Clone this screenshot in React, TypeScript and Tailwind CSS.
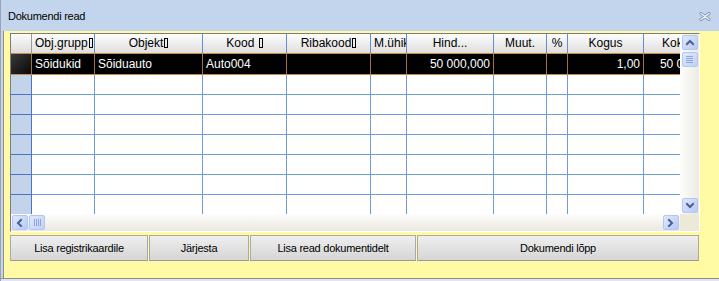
import React from "react";

type Col = {
  w: string;
  head: string;
  box?: boolean;
  value?: string;
  right?: boolean;
  headCls?: string;
};

const cols: Col[] = [
  { w: "w-[63px]", head: "Obj.grupp", box: true, value: "Sõidukid" },
  { w: "w-[108px]", head: "Objekt", box: true, value: "Sõiduauto" },
  { w: "w-[84px]", head: "Kood ", box: true, value: "Auto004" },
  { w: "w-[84px]", head: "Ribakood", box: true },
  { w: "w-[36px]", head: "M.ühik" },
  { w: "w-[87px]", head: "Hind...", value: "50 000,000", right: true },
  { w: "w-[53px]", head: "Muut." },
  { w: "w-[21px]", head: "%" },
  { w: "w-[76px]", head: "Kogus", value: "1,00", right: true },
  { w: "w-[80px]", head: "Kokku", value: "50 000,000", right: true, headCls: "text-left pl-[18px]" },
];

const buttons = [
  { w: "w-[138px]", label: "Lisa registrikaardile" },
  { w: "w-[100px]", label: "Järjesta" },
  { w: "w-[166px]", label: "Lisa read dokumentidelt" },
  { w: "w-[282px]", label: "Dokumendi lõpp" },
];

// missing-glyph box the grid draws after some header names
function Box() {
  return <span className="inline-block w-[4px] h-[10px] border border-black align-[-1px] ml-[1px]" />;
}

function Chevron({ dir }: { dir: "up" | "down" | "left" | "right" }) {
  const d = {
    up: "M2 6 L5 3 L8 6",
    down: "M2 3 L5 6 L8 3",
    left: "M6 2 L3 5 L6 8",
    right: "M3 2 L6 5 L3 8",
  }[dir];
  return (
    <svg width="10" height="9" viewBox="0 0 10 9">
      <path d={d} fill="none" stroke="#4d6185" strokeWidth="2" strokeLinecap="square" />
    </svg>
  );
}

function ScrollBtn({ dir }: { dir: "up" | "down" | "left" | "right" }) {
  return (
    <div className="w-[16px] h-[15px] rounded-[2px] border border-[#b3c6f0] bg-gradient-to-br from-[#dfe8fd] to-[#b6c9f7] flex items-center justify-center shrink-0">
      <Chevron dir={dir} />
    </div>
  );
}

function Thumb({ vertical }: { vertical?: boolean }) {
  return (
    <div className="w-[16px] h-[15px] rounded-[2px] border border-[#b3c6f0] bg-gradient-to-br from-[#dfe8fd] to-[#c0d1f8] flex items-center justify-center shrink-0">
      <div className={vertical ? "flex flex-col gap-[1px]" : "flex gap-[1px]"}>
        {[0, 1, 2, 3].map((i) => (
          <div key={i} className={vertical ? "w-[7px] h-[1px] bg-[#8ea6dc]" : "w-[1px] h-[7px] bg-[#8ea6dc]"} />
        ))}
      </div>
    </div>
  );
}

export default function App() {
  return (
    <div className="w-[719px] h-[281px] flex flex-col overflow-hidden bg-[#c3d5ec] border-l border-[#9aa3b0] font-['Liberation_Sans',Arial,sans-serif] text-black">
      <div className="h-[31px] shrink-0 flex items-center justify-between pl-[7px] pr-[8px]">
        <span className="text-[11px] tracking-[-0.25px] pt-[1px]">Dokumendi read</span>
        <svg width="12" height="9" viewBox="0 0 12 9" className="mt-[1px]">
          <path d="M2 1.5 L10 7.5 M10 1.5 L2 7.5" stroke="#8795aa" strokeWidth="3" strokeLinecap="round" />
          <path d="M2 1.5 L10 7.5 M10 1.5 L2 7.5" stroke="#f4f7fb" strokeWidth="1.2" strokeLinecap="round" />
        </svg>
      </div>

      <div className="h-[247px] shrink-0 ml-[2px] bg-[#fffaa3] border-l border-[#8e8e8e] pl-[6px] pt-[2px] flex flex-col">
        <div className="w-[690px] h-[199px] border-t border-l border-[#7c7c7c] border-r border-b border-r-white border-b-white flex flex-col">
          <div className="h-[180px] flex">
            <div className="w-[669px] overflow-hidden bg-white text-[12px] leading-none">
              {/* header */}
              <div className="flex h-[19px]">
                <div className="w-[21px] shrink-0 border-r border-[#9c9c9c] bg-gradient-to-b from-[#fbfbfb] to-[#dcdcdc]" />
                {cols.map((c) => (
                  <div
                    key={c.head}
                    className={`${c.w} shrink-0 border-r border-[#5d91d4] bg-gradient-to-b from-[#fdfdfd] to-[#dedede] whitespace-nowrap overflow-hidden pt-[3px] ${c.headCls ?? "text-center px-[3px]"}`}
                  >
                    {c.head}
                    {c.box && <Box />}
                  </div>
                ))}
              </div>
              {/* selected row */}
              <div className="flex h-[22px] border-y border-[#c98a45] bg-black text-white">
                <div className="w-[21px] shrink-0 border-r border-[#a5743d] bg-gradient-to-br from-[#3a3a3a] to-[#0a0a0a]" />
                {cols.map((c) => (
                  <div
                    key={c.head}
                    className={`${c.w} shrink-0 border-r border-[#a5743d] whitespace-nowrap overflow-hidden px-[3px] pt-[4px] ${c.right ? "text-right" : "text-left"}`}
                  >
                    {c.value}
                  </div>
                ))}
              </div>
              {/* empty rows */}
              {[0, 1, 2, 3, 4, 5, 6].map((r) => (
                <div key={r} className="flex h-[20px]">
                  <div className="w-[21px] shrink-0 border-r border-b border-[#4677c0] bg-[#c3d3ea]" />
                  {cols.map((c) => (
                    <div key={c.head} className={`${c.w} shrink-0 border-r border-b border-[#6d9cda]`} />
                  ))}
                </div>
              ))}
            </div>
            <div className="flex-1 flex flex-col items-center justify-between py-[1px] bg-gradient-to-r from-[#fdfdfb] to-[#ecebe3]">
              <div className="flex flex-col gap-[2px]">
                <ScrollBtn dir="up" />
                <Thumb vertical />
              </div>
              <ScrollBtn dir="down" />
            </div>
          </div>
          <div className="flex-1 flex">
            <div className="w-[669px] flex items-center justify-between pl-[1px] pr-[1px] bg-gradient-to-b from-[#fdfdfb] to-[#ebe8df]">
              <div className="flex gap-[1px]">
                <ScrollBtn dir="left" />
                <Thumb />
              </div>
              <ScrollBtn dir="right" />
            </div>
            <div className="flex-1 bg-[#ece9d8]" />
          </div>
        </div>

        <div className="mt-[3px] flex gap-[1px] h-[26px]">
          {buttons.map((b) => (
            <div
              key={b.label}
              className={`${b.w} shrink-0 border border-[#a9a9a9] border-b-[#9a9a9a] bg-gradient-to-b from-[#efefef] to-[#d5d5d5] flex items-center justify-center text-[11px] tracking-[-0.25px]`}
            >
              {b.label}
            </div>
          ))}
        </div>
      </div>

      <div className="flex-1 border-t border-[#8e8e8e] bg-[#dfe6ef]" />
    </div>
  );
}
